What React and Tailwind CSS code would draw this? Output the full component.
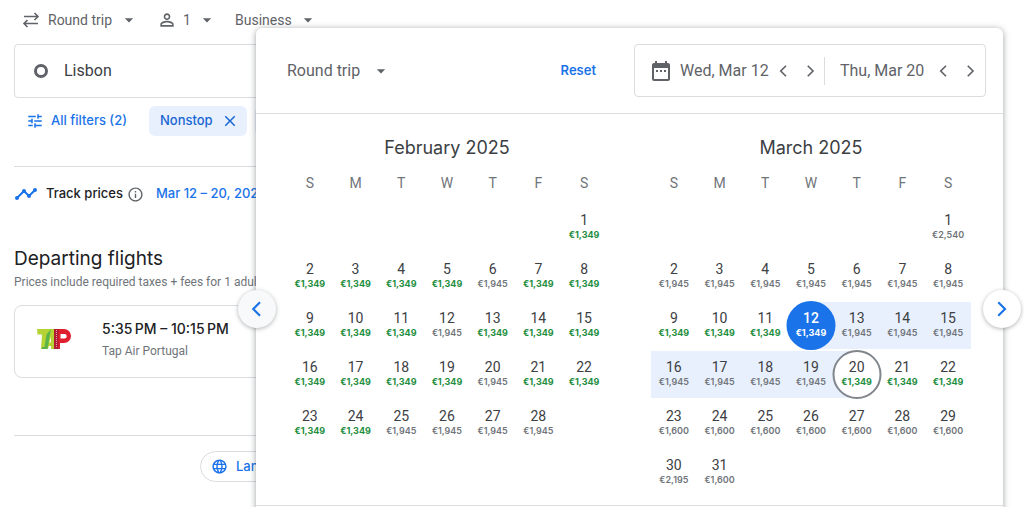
import React, { useState } from "react";
import {
  MdArrowDropDown,
  MdClose,
  MdDateRange,
  MdInfoOutline,
  MdLanguage,
  MdPersonOutline,
  MdTimeline,
  MdTune,
} from "react-icons/md";

const WEEKDAYS = ["S", "M", "T", "W", "T", "F", "S"];

// firstWeekday is the column of day 1, prices are listed from day 1 on
const MONTHS = [
  {
    name: "February 2025",
    firstWeekday: 6,
    prices: [
      1349, 1349, 1349, 1349, 1349, 1945, 1349, 1349, 1349, 1349, 1349, 1945,
      1349, 1349, 1349, 1349, 1349, 1349, 1349, 1945, 1349, 1349, 1349, 1349,
      1945, 1945, 1945, 1945,
    ],
  },
  {
    name: "March 2025",
    firstWeekday: 6,
    start: 12,
    end: 20,
    prices: [
      2540, 1945, 1945, 1945, 1945, 1945, 1945, 1945, 1349, 1349, 1349, 1349,
      1945, 1945, 1945, 1945, 1945, 1945, 1945, 1349, 1349, 1349, 1600, 1600,
      1600, 1600, 1600, 1600, 1600, 2195, 1600,
    ],
  },
];

const LOWEST_PRICE = 1349;

const getWeeks = ({ firstWeekday, prices }) => {
  const cells = [
    ...Array(firstWeekday).fill(null),
    ...prices.map((price, i) => ({ day: i + 1, price })),
  ];
  while (cells.length % 7 !== 0) cells.push(null);

  const weeks = [];
  for (let i = 0; i < cells.length; i += 7) weeks.push(cells.slice(i, i + 7));
  return weeks;
};

const Chevron = ({ right, className }) => (
  <svg
    viewBox="0 0 10 16"
    fill="none"
    stroke="currentColor"
    strokeWidth="1.9"
    className={className}
  >
    <path d={right ? "M2 2l6 6-6 6" : "M8 2L2 8l6 6"} />
  </svg>
);

const RoundTripIcon = () => (
  <svg
    viewBox="0 0 18 18"
    fill="none"
    stroke="currentColor"
    strokeWidth="1.6"
    className="mr-2 size-[18px]"
  >
    <path d="M2 5.500h14M12.500 2l3.500 3.500L12.500 9M16 12.500H2M5.500 9L2 12.500 5.500 16" />
  </svg>
);

const TapLogo = () => (
  <svg viewBox="0 0 34 20" className="h-5 w-[34px]" aria-label="TAP">
    <path d="M0 0h17v20H4l1-14.500H.5z" fill="#b5d334" />
    <path d="M9.500 5.500L14 0l-3.500 20H4.500l1-2h2z" fill="#5cb548" />
    <path d="M14 7.500v6h-1.800z" fill="#f4f9dc" />
    <path d="M11.800 17h2.200v3h-3z" fill="#fff" />
    <path d="M17 0h6v20h-6z" fill="#b01c33" />
    <path d="M19.500 1v17" stroke="#e8a0a8" strokeDasharray="1 1" />
    <path
      d="M21.500 0H27a7 7 0 0 1 0 14h-4v6h-1.500zM23.500 5v4.500h4a2.250 2.250 0 0 0 0-4.500z"
      fill="#df1f2d"
      fillRule="evenodd"
    />
  </svg>
);

const Dropdown = ({ label, options, icon, className = "gap-1.5" }) => (
  <label className={`flex items-center ${className}`}>
    <span className="flex items-center">
      {icon}
      <select
        aria-label={label}
        className="appearance-none bg-transparent outline-none cursor-pointer"
      >
        {options.map((o) => (
          <option key={o}>{o}</option>
        ))}
      </select>
    </span>
    <MdArrowDropDown className="size-5 pointer-events-none" />
  </label>
);

const DayCell = ({ cell, start, end }) => {
  if (!cell) return <td className="h-[49px] p-0" />;

  const { day, price } = cell;
  const isStart = day === start;
  const isEnd = day === end;
  const inRange = day > start && day < end;

  return (
    <td
      className={`relative h-[49px] p-0 pb-0.5 ${isStart || isEnd ? "z-10" : ""}`}
    >
      {inRange && <span className="absolute inset-x-0 inset-y-px bg-[#e8f0fe]" />}
      {isStart && (
        <>
          <span className="absolute left-1/2 right-0 inset-y-px bg-[#e8f0fe]" />
          <span className="absolute top-0 left-1/2 -translate-x-1/2 size-[49px] rounded-full bg-[#1a73e8]" />
        </>
      )}
      {isEnd && (
        <>
          <span className="absolute left-0 right-1/2 inset-y-px bg-[#e8f0fe]" />
          <span className="absolute top-0 left-1/2 -translate-x-1/2 size-[49px] rounded-full border-2 border-[#80868b] bg-white" />
        </>
      )}
      <button
        type="button"
        className={`relative z-10 flex flex-col items-center w-full cursor-pointer ${
          isStart ? "text-white" : "text-[#3c4043]"
        }`}
      >
        <span className={`text-sm leading-4 ${isStart ? "font-medium" : ""}`}>
          {day}
        </span>
        <span
          className={`font-[Inter,sans-serif] text-[9px] leading-[13px] ${
            isStart
              ? "font-bold"
              : price === LOWEST_PRICE
                ? "font-bold text-[#1e8e3e]"
                : "font-semibold text-[#70757a]"
          }`}
        >
          €{price.toLocaleString("en-US")}
        </span>
      </button>
    </td>
  );
};

const Month = ({ month }) => (
  <table className="w-full table-fixed border-collapse text-center">
    <caption className="pb-2 font-[Inter,sans-serif] text-lg leading-7 text-[#3c4043]">
      {month.name}
    </caption>
    <thead>
      <tr>
        {WEEKDAYS.map((d, i) => (
          <th
            key={i}
            className="h-[33px] p-0 pb-2 text-sm font-normal text-[#70757a]"
          >
            {d}
          </th>
        ))}
      </tr>
    </thead>
    <tbody>
      {getWeeks(month).map((week, i) => (
        <tr key={i}>
          {week.map((cell, j) => (
            <DayCell key={j} cell={cell} start={month.start} end={month.end} />
          ))}
        </tr>
      ))}
    </tbody>
  </table>
);

const DateStepper = ({ label, value }) => (
  <div className="flex items-center">
    <input
      aria-label={label}
      defaultValue={value}
      className="w-[90px] text-base text-[#5f6368] outline-none"
    />
    <button
      type="button"
      aria-label={`${label} earlier`}
      className="grid h-7 w-[27px] place-items-center"
    >
      <Chevron className="h-[14px]" />
    </button>
    <button
      type="button"
      aria-label={`${label} later`}
      className="grid h-7 w-[27px] place-items-center"
    >
      <Chevron right className="h-[14px]" />
    </button>
  </div>
);

const DatePicker = () => (
  <div
    role="dialog"
    aria-label="Choose dates"
    className="absolute left-64 right-[21px] top-7 rounded-md bg-white text-[#5f6368] shadow-[0_1px_6px_rgba(60,64,67,0.5)]"
  >
    <div className="flex items-center justify-between border-b border-[#dadce0] py-4 pl-[31px] pr-[17px]">
      <Dropdown
        label="Trip type"
        options={["Round trip"]}
        className="gap-2.5 text-base"
      />
      <div className="flex items-center gap-[38px]">
        <button
          type="button"
          className="font-[Inter,sans-serif] text-[13px] font-semibold text-[#1a73e8]"
        >
          Reset
        </button>
        <div className="flex h-[53px] items-center rounded border border-[#dadce0] pl-[14px] pr-px">
          <MdDateRange className="mr-[7px] size-6" />
          <DateStepper label="Departure" value="Wed, Mar 12" />
          <div className="mr-[15px] h-7 w-px bg-[#dadce0]" />
          <DateStepper label="Return" value="Thu, Mar 20" />
        </div>
      </div>
    </div>

    <div className="grid grid-cols-2 items-start gap-11 border-b border-[#dadce0] pt-5 pr-8 pb-2 pl-[31px]">
      {MONTHS.map((m) => (
        <Month key={m.name} month={m} />
      ))}
    </div>
    <div className="h-14" />

    <button
      type="button"
      aria-label="Previous month"
      className="absolute -left-[18px] top-[262px] z-20 grid size-[38px] place-items-center rounded-full bg-[#f8f9fa] text-[#1a73e8] shadow-[0_1px_4px_rgba(60,64,67,0.4)]"
    >
      <Chevron className="h-[18px]" />
    </button>
    <button
      type="button"
      aria-label="Next month"
      className="absolute -right-[18px] top-[262px] z-20 grid size-[38px] place-items-center rounded-full bg-white text-[#1a73e8] shadow-[0_1px_4px_rgba(60,64,67,0.4)]"
    >
      <Chevron right className="h-[18px]" />
    </button>
  </div>
);

const FlightSearch = () => {
  const [origin, setOrigin] = useState("Lisbon");

  return (
    <main className="relative h-screen overflow-hidden whitespace-nowrap bg-white px-[14px] pt-2 font-[Roboto,sans-serif] text-[#5f6368]">
      <div className="flex h-6 items-center gap-[18px] pl-2 text-sm">
        <Dropdown
          label="Ticket type"
          options={["Round trip"]}
          icon={<RoundTripIcon />}
        />
        <Dropdown
          label="Passengers"
          options={["1"]}
          icon={<MdPersonOutline className="mr-1.5 size-5" />}
        />
        <Dropdown label="Cabin class" options={["Business"]} />
      </div>

      <label className="mt-3 mr-8 flex h-[54px] items-center gap-4 rounded border border-[#dadce0] pl-[19px]">
        <span className="size-[14px] rounded-full border-3 border-[#5f6368]" />
        <input
          aria-label="Where from?"
          value={origin}
          onChange={(e) => setOrigin(e.target.value)}
          className="text-base text-[#3c4043] outline-none"
        />
      </label>

      <div className="mt-2 flex items-center gap-2 font-[Inter,sans-serif] text-[13px] font-medium text-[#1a73e8]">
        <button
          type="button"
          className="flex h-[30px] items-center gap-[7px] pl-3 pr-[14px]"
        >
          <MdTune className="size-[18px]" />
          All filters (2)
        </button>
        <button
          type="button"
          className="flex h-[30px] items-center gap-2 rounded-md bg-[#e8f0fe] pl-[11px] pr-2 text-[#1967d2]"
        >
          Nonstop
          <MdClose className="size-[18px]" />
        </button>
        <button type="button" className="h-[30px] rounded-md bg-[#e8f0fe] px-3">
          Stops
        </button>
      </div>

      <div className="mt-[30px] mr-8 flex items-center border-t border-[#dadce0] pt-[15px] font-[Inter,sans-serif] text-[13px] font-medium">
        <MdTimeline className="mr-2 size-6 text-[#1a73e8]" />
        <span className="text-[#202124]">Track prices</span>
        <MdInfoOutline className="ml-1 mr-3 size-[17px]" />
        <span className="text-[#1a73e8]">Mar 12 – 20, 2025</span>
      </div>

      <h1 className="mt-[39px] font-[Inter,sans-serif] text-[19px] leading-7 text-[#202124]">
        Departing flights
      </h1>
      <p className="text-xs leading-[18px] text-[#70757a]">
        Prices include required taxes + fees for 1 adult.
      </p>

      <div className="mt-[14px] mr-8 flex h-[73px] items-center gap-[31px] rounded-lg border border-[#dadce0] pb-[5px] pl-[22px]">
        <TapLogo />
        <div>
          <p className="pb-1 font-[Inter,sans-serif] text-sm font-medium text-[#202124]">
            5:35{"\u202f"}PM – 10:15{"\u202f"}PM
          </p>
          <p className="text-xs text-[#70757a]">Tap Air Portugal</p>
        </div>
      </div>

      <div className="mt-[57px] mr-8 border-t border-[#dadce0] pt-[15px] pl-[186px]">
        <button
          type="button"
          className="flex h-[31px] items-center gap-2 rounded-full border border-[#dadce0] px-[10px] font-[Inter,sans-serif] text-[13px] font-medium text-[#1a73e8]"
        >
          <MdLanguage className="size-[17px]" />
          Language
        </button>
      </div>

      <DatePicker />
    </main>
  );
};

export default FlightSearch;
